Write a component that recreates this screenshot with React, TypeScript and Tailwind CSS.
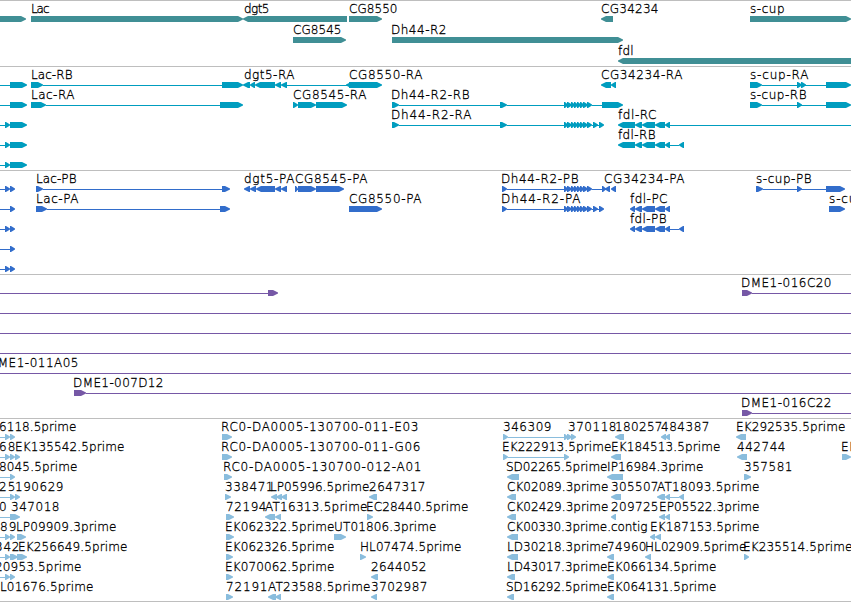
// label: [text, left, right], feature: [start, end, strand], intron: [start, end]
type Label = [string, number, number];
type Feature = [number, number, 1 | -1];
type Intron = [number, number];

interface RowData {
  labels?: Label[];
  features?: Feature[];
  introns?: Intron[];
}

interface TrackData {
  name: string;
  fill: string;
  rowClass: string;
  className: string;
  rows: RowData[];
}

const dh44Exons: Feature[] = [
  [564, 568, 1],
  [567, 572, 1],
  [571, 575, 1],
  [574, 578, 1],
  [577, 581, 1],
  [580, 584, 1],
  [583, 588, 1],
  [587, 592, 1],
];

const dh44Tail: Feature[] = [
  [593, 598, 1],
  [599, 604, 1],
];

const fdlExons: Feature[] = [
  [635, 642, -1],
  [642, 655, -1],
  [655, 665, -1],
  [665, 670, -1],
];

const genes: RowData[] = [
  {
    labels: [
      ["Lac", 31, 49],
      ["dgt5", 244, 269],
      ["CG8550", 349, 397],
      ["CG34234", 601, 658],
      ["s-cup", 750, 784],
    ],
    features: [
      [-5, 26, 1],
      [31, 243, 1],
      [243, 347, -1],
      [349, 382, 1],
      [601, 613, -1],
      [750, 851, 1],
    ],
  },
  {
    labels: [
      ["CG8545", 293, 341],
      ["Dh44-R2", 391, 446],
    ],
    features: [
      [293, 346, 1],
      [392, 623, 1],
    ],
  },
  { labels: [["fdl", 618, 633]], features: [[618, 860, -1]] },
];

const transcripts: RowData[] = [
  {
    labels: [
      ["Lac-RB", 31, 72],
      ["dgt5-RA", 244, 294],
      ["CG8550-RA", 349, 422],
      ["CG34234-RA", 601, 682],
      ["s-cup-RA", 750, 808],
    ],
    introns: [[0, 10], [43, 222], [287, 347], [762, 826]],
    features: [
      [10, 27, 1],
      [31, 43, 1],
      [222, 243, 1],
      [243, 250, -1],
      [250, 255, -1],
      [255, 275, -1],
      [275, 281, -1],
      [281, 287, -1],
      [346, 352, -1],
      [349, 382, 1],
      [601, 611, -1],
      [611, 616, -1],
      [750, 762, 1],
      [797, 802, 1],
      [801, 806, 1],
      [826, 851, 1],
    ],
  },
  {
    labels: [
      ["Lac-RA", 31, 74],
      ["CG8545-RA", 293, 366],
      ["Dh44-R2-RB", 391, 469],
      ["s-cup-RB", 750, 806],
    ],
    introns: [[0, 10], [46, 220], [399, 500], [507, 564], [592, 602], [762, 826]],
    features: [
      [10, 27, 1],
      [31, 46, 1],
      [220, 243, 1],
      [293, 298, 1],
      [298, 316, 1],
      [316, 347, 1],
      [392, 399, 1],
      [500, 507, 1],
      ...dh44Exons,
      [602, 623, 1],
      [750, 762, 1],
      [797, 802, 1],
      [826, 851, 1],
    ],
  },
  {
    labels: [
      ["Dh44-R2-RA", 391, 471],
      ["fdl-RC", 618, 656],
    ],
    introns: [[0, 5], [399, 500], [507, 564], [592, 600], [670, 851]],
    features: [
      [5, 10, 1],
      [10, 27, 1],
      [392, 399, 1],
      [500, 507, 1],
      ...dh44Exons,
      ...dh44Tail,
      [618, 635, -1],
      ...fdlExons,
    ],
  },
  {
    labels: [["fdl-RB", 618, 655]],
    introns: [[0, 5], [670, 679]],
    features: [[5, 10, 1], [10, 27, 1], [618, 635, -1], ...fdlExons, [679, 684, -1]],
  },
  { introns: [[0, 5]], features: [[5, 10, 1], [10, 27, 1]] },
];

const proteins: RowData[] = [
  {
    labels: [
      ["Lac-PB", 36, 76],
      ["dgt5-PA", 244, 294],
      ["CG8545-PA", 295, 367],
      ["Dh44-R2-PB", 501, 578],
      ["CG34234-PA", 604, 684],
      ["s-cup-PB", 756, 811],
    ],
    introns: [[0, 5], [43, 222], [507, 564], [592, 602], [763, 826]],
    features: [
      [5, 10, 1],
      [10, 15, 1],
      [36, 43, 1],
      [222, 230, 1],
      [244, 250, -1],
      [250, 256, -1],
      [256, 275, -1],
      [275, 281, -1],
      [281, 287, -1],
      [295, 298, 1],
      [298, 316, 1],
      [316, 344, 1],
      [502, 507, 1],
      ...dh44Exons,
      [602, 606, 1],
      [605, 610, -1],
      [611, 616, -1],
      [756, 763, 1],
      [797, 802, 1],
      [826, 845, 1],
    ],
  },
  {
    labels: [
      ["Lac-PA", 36, 78],
      ["CG8550-PA", 349, 421],
      ["Dh44-R2-PA", 501, 580],
      ["fdl-PC", 630, 667],
      ["s-cup-PA", 829, 886],
    ],
    introns: [[0, 10], [47, 220], [507, 564], [592, 600]],
    features: [
      [10, 15, 1],
      [36, 47, 1],
      [220, 230, 1],
      [349, 382, 1],
      [502, 507, 1],
      ...dh44Exons,
      ...dh44Tail,
      [630, 635, -1],
      ...fdlExons,
      [829, 845, 1],
    ],
  },
  {
    labels: [["fdl-PB", 630, 666]],
    introns: [[0, 5], [670, 679]],
    features: [[5, 10, 1], [10, 15, 1], [630, 635, -1], ...fdlExons, [679, 684, -1]],
  },
  { introns: [[0, 10]], features: [[10, 15, 1]] },
  { introns: [[0, 5]], features: [[5, 10, 1], [10, 15, 1]] },
];

const clones: RowData[] = [
  {
    labels: [["DME1-016C20", 741, 831]],
    introns: [[0, 268], [752, 851]],
    features: [[268, 278, 1], [742, 752, 1]],
  },
  { introns: [[0, 851]] },
  { introns: [[0, 851]] },
  { introns: [[0, 851]] },
  { labels: [["DME1-011A05", -12, 78]], introns: [[0, 851]] },
  { labels: [["DME1-007D12", 73, 163]], introns: [[86, 851]], features: [[74, 86, 1]] },
  { labels: [["DME1-016C22", 741, 831]], introns: [[752, 851]], features: [[742, 752, 1]] },
];

const ests: RowData[] = [
  {
    labels: [
      ["6118.5prime", -1, 76],
      ["RC0-DA0005-130700-011-E03", 221, 418],
      ["346309", 503, 551],
      ["370118", 568, 616],
      ["180257", 615, 662],
      ["484387", 661, 709],
      ["EK292535.5prime", 736, 845],
    ],
    introns: [[0, 5], [508, 564]],
    features: [
      [5, 10, 1],
      [10, 15, 1],
      [222, 232, 1],
      [503, 508, 1],
      [564, 568, 1],
      [567, 572, 1],
      [571, 576, 1],
      [615, 624, -1],
      [661, 666, -1],
      [665, 670, -1],
      [736, 746, -1],
    ],
  },
  {
    labels: [
      ["68", -1, 15],
      ["EK135542.5prime", 15, 124],
      ["RC0-DA0005-130700-011-G06", 221, 420],
      ["EK222913.5prime", 502, 611],
      ["EK184513.5prime", 611, 720],
      ["442744", 737, 785],
      ["EK", 841, 856],
    ],
    introns: [[0, 5], [508, 564]],
    features: [
      [5, 10, 1],
      [10, 15, 1],
      [15, 20, 1],
      [222, 232, 1],
      [503, 508, 1],
      [564, 569, 1],
      [611, 621, -1],
      [737, 747, -1],
      [842, 851, 1],
    ],
  },
  {
    labels: [
      ["8045.5prime", -1, 77],
      ["RC0-DA0005-130700-012-A01", 223, 421],
      ["SD02265.5prime", 506, 607],
      ["IP16984.3prime", 607, 703],
      ["357581", 744, 792],
    ],
    introns: [[0, 10]],
    features: [[10, 15, 1], [224, 232, 1], [507, 519, -1], [607, 623, -1], [744, 751, 1]],
  },
  {
    labels: [
      ["25", -1, 15],
      ["190629", 15, 63],
      ["338471", 225, 273],
      ["LP05996.5prime", 270, 369],
      ["2647317", 369, 425],
      ["CK02089.3prime", 507, 608],
      ["305507", 611, 658],
      ["AT18093.5prime", 657, 759],
    ],
    introns: [[0, 10], [670, 679]],
    features: [
      [10, 15, 1],
      [15, 20, 1],
      [225, 231, 1],
      [271, 277, -1],
      [276, 282, -1],
      [281, 287, -1],
      [369, 377, -1],
      [507, 516, -1],
      [611, 621, -1],
      [657, 665, -1],
      [665, 670, -1],
      [679, 684, -1],
    ],
  },
  {
    labels: [
      ["0", -1, 7],
      ["347018", 11, 59],
      ["72194", 226, 266],
      ["AT16313.5prime", 265, 367],
      ["EC28440.5prime", 366, 468],
      ["CK02429.3prime", 507, 608],
      ["209725", 611, 658],
      ["EP05522.3prime", 659, 759],
    ],
    introns: [[0, 10]],
    features: [
      [10, 20, 1],
      [226, 234, 1],
      [265, 275, -1],
      [275, 281, -1],
      [367, 373, 1],
      [507, 516, -1],
      [611, 616, -1],
      [659, 665, -1],
      [665, 670, -1],
    ],
  },
  {
    labels: [
      ["89", 0, 16],
      ["LP09909.3prime", 16, 116],
      ["EK062322.5prime", 225, 334],
      ["UT01806.3prime", 334, 436],
      ["CK00330.3prime.contig", 507, 647],
      ["EK187153.5prime", 650, 759],
    ],
    introns: [[0, 5]],
    features: [
      [5, 10, 1],
      [10, 15, 1],
      [17, 26, 1],
      [226, 234, 1],
      [334, 346, 1],
      [507, 518, -1],
      [650, 655, -1],
      [655, 661, -1],
    ],
  },
  {
    labels: [
      ["342", -5, 19],
      ["EK256649.5prime", 18, 127],
      ["EK062326.5prime", 225, 334],
      ["HL07474.5prime", 360, 461],
      ["LD30218.3prime", 507, 608],
      ["74960", 607, 646],
      ["HL02909.5prime", 645, 746],
      ["EK235514.5prime", 743, 852],
    ],
    introns: [[0, 5]],
    features: [
      [5, 10, 1],
      [10, 18, 1],
      [17, 27, 1],
      [226, 233, 1],
      [360, 366, 1],
      [507, 518, -1],
      [607, 614, -1],
      [645, 651, -1],
      [744, 749, 1],
    ],
  },
  {
    labels: [
      ["20953.5prime", -5, 81],
      ["EK070062.5prime", 225, 334],
      ["2644052", 371, 426],
      ["LD43017.3prime", 507, 607],
      ["EK066134.5prime", 607, 716],
    ],
    introns: [[0, 5]],
    features: [
      [5, 10, 1],
      [10, 15, 1],
      [226, 233, 1],
      [371, 378, -1],
      [507, 515, -1],
      [607, 614, -1],
    ],
  },
  {
    labels: [
      ["L01676.5prime", 0, 93],
      ["72191", 226, 267],
      ["AT23588.5prime", 268, 370],
      ["3702987", 371, 427],
      ["SD16292.5prime", 506, 607],
      ["EK064131.5prime", 607, 716],
    ],
    features: [
      [226, 233, 1],
      [268, 276, -1],
      [275, 281, -1],
      [371, 377, -1],
      [507, 514, -1],
      [607, 614, -1],
    ],
  },
];

const tracks: TrackData[] = [
  { name: "genes", fill: "fill-[#408f95]", rowClass: "h-[21px]", className: "pb-0.5", rows: genes },
  { name: "transcripts", fill: "fill-[#009dbf]", rowClass: "h-5", className: "pb-[3px]", rows: transcripts },
  { name: "proteins", fill: "fill-[#326dcb]", rowClass: "h-5", className: "pb-[3px]", rows: proteins },
  { name: "clones", fill: "fill-[#7658a6]", rowClass: "h-5", className: "pb-[3px]", rows: clones },
  { name: "ests", fill: "fill-[#8abddd]", rowClass: "h-5", className: "border-b pb-0.5", rows: ests },
];

// block arrow, 6px tall, pointing along the strand
function arrowPath([start, end, strand]: Feature) {
  const head = Math.min(5, end - start - 1);
  if (strand === 1) {
    return `M${start} 15H${end - head}L${end} 17.5V18.5L${end - head} 21H${start}Z`;
  }
  return `M${end} 15H${start + head}L${start} 17.5V18.5L${start + head} 21H${end}Z`;
}

function TrackRow({ row, fill, rowClass }: { row: RowData; fill: string; rowClass: string }) {
  return (
    <svg className={`block w-full shrink-0 overflow-visible ${rowClass}`}>
      <g className={fill}>
        {row.introns?.map(([start, end]) => (
          <rect key={start} x={start} y={18} width={end - start} height={1} />
        ))}
        {row.features?.map((feature) => (
          <path key={`${feature[0]}-${feature[1]}`} d={arrowPath(feature)} />
        ))}
      </g>
      <g className="fill-black stroke-black stroke-[0.3px] font-['DejaVu_Sans','DejaVu_Sans_Light',sans-serif] text-[12px] font-extralight">
        {row.labels?.map(([text, left, right]) => (
          <text key={text} x={left} y={12} textLength={right - left + 0.5}>
            {text}
          </text>
        ))}
      </g>
    </svg>
  );
}

function Track({ track }: { track: TrackData }) {
  return (
    <section className={`flex flex-col border-t border-[#bebebe] ${track.className}`}>
      {track.rows.map((row, i) => (
        <TrackRow key={i} row={row} fill={track.fill} rowClass={track.rowClass} />
      ))}
    </section>
  );
}

export default function App() {
  return (
    <main className="flex h-[602px] w-[851px] flex-col overflow-hidden bg-white">
      {tracks.map((track) => (
        <Track key={track.name} track={track} />
      ))}
    </main>
  );
}
